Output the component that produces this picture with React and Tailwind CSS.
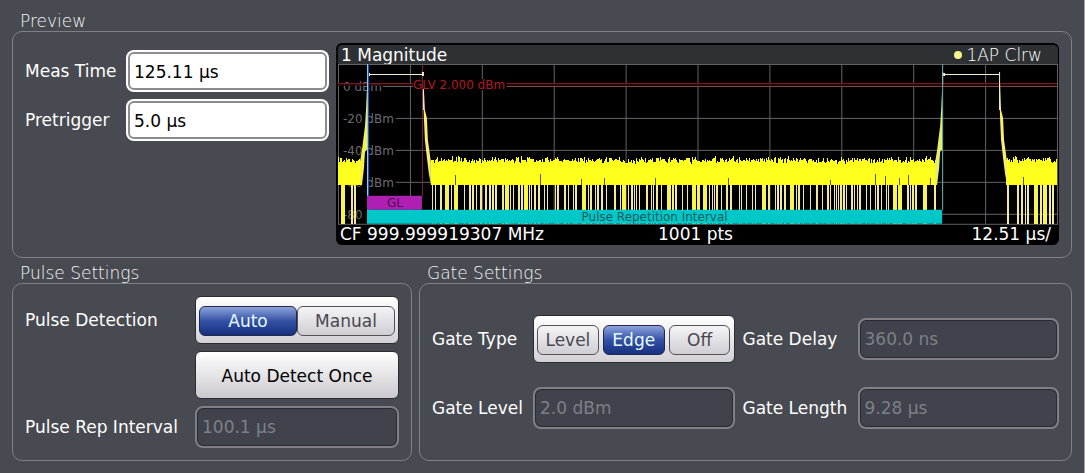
import { useState } from 'react';

const GRID_X = [72, 144, 216, 288, 360, 432, 504, 576, 648];
const GRID_Y = [
  { y: 22, label: '0 dBm', x: 5, end: 45 },
  { y: 54, label: '-20 dBm', x: 5, end: 58 },
  { y: 86, label: '-40 dBm', x: 5, end: 58 },
  { y: 118, label: '-60 dBm', x: 5, end: 58 },
  { y: 150, label: '-80', x: 5, end: 30 },
];

// x ranges of the trace that only contain the noise floor
const NOISE_RANGES = [
  [0, 24],
  [93, 600],
  [669, 720],
];

function buildNoise() {
  let seed = 71;
  const random = () => {
    seed = (seed * 16807) % 2147483647;
    return seed / 2147483647;
  };
  let band = '';
  let drops = '';
  let solidDrops = '';
  let notches = '';
  NOISE_RANGES.forEach(([from, to]) => {
    for (let x = from; x < to; x++) {
      const top = 92 + Math.round((random() + random()) * 4);
      band += `M${x} ${top}h1V121h-1z`;
      if (random() > 0.95) notches += `M${x} ${109 + Math.round(random() * 7)}h1V121h-1z`;
    }
    let x = from + 1 + Math.round(random() * 3);
    while (x < to - 2) {
      const r = random();
      const width = r < 0.5 ? 1 : r < 0.85 ? 2 : 4;
      const bar = `M${x} 121h${width}V160h-${width}z`;
      if (width > 2) solidDrops += bar;
      else drops += bar;
      x += width + 1 + Math.floor(random() * random() * 9);
    }
  });
  return { band, drops, solidDrops, notches };
}

const NOISE = buildNoise();

function MagnitudePlot() {
  return (
    <svg
      viewBox="0 0 721 161"
      className="block w-full h-auto"
      fontFamily="'DejaVu Sans', sans-serif"
      fontSize="12"
      role="img"
      aria-label="Magnitude"
    >
      <rect width="721" height="161" fill="#000" />

      {/* grid */}
      <g fill="#626366">
        <rect width="721" height="1" />
        <rect y="160" width="721" height="1" />
        <rect width="1" height="161" />
        <rect x="720" width="1" height="161" />
        {GRID_X.map((x) => (
          <rect key={x} x={x} width="1" height="160" />
        ))}
        {GRID_Y.map((g) => (
          <rect key={g.y} x={g.end} y={g.y} width={720 - g.end} height="1" />
        ))}
      </g>
      <g fill="#6c6c70">
        {GRID_Y.map((g) => (
          <text key={g.y} x={g.x} y={g.y + 5}>
            {g.label}
          </text>
        ))}
      </g>

      {/* gate level */}
      <rect y="20" width="720" height="2" fill="#2c080a" fillOpacity="0.8" />
      <rect y="19" width="720" height="1" fill="#7a1f22" />
      <rect x="171" y="22" width="549" height="1" fill="#7a4446" />
      <rect x="75" y="15" width="94" height="11" fill="#080000" />
      <rect x="84" y="0" width="1" height="132" fill="#7c2440" />
      <text x="75" y="25" fill="#a81e24">GLV 2.000 dBm</text>

      {/* trace */}
      <path d={NOISE.drops} fill="#f2ea96" shapeRendering="crispEdges" />
      <path d={NOISE.solidDrops} fill="#f8f450" shapeRendering="crispEdges" />
      <path d={NOISE.band} fill="#ffff1e" shapeRendering="crispEdges" />
      <path d={NOISE.notches} fill="#5c5a10" shapeRendering="crispEdges" />
      <path d="M22 121V98L24 86L27 62L28 46L29 24V86L27 88L26 104L24 121z" fill="#f6f04c" />
      <path d="M85 25H86L87 46L89 54L90 76L93 98V121L91 110L89 94L87 76L86 54z" fill="#f8f06c" />
      <path d="M598 121V98L600 86L603 62L604 46L605 24V86L603 88L602 104L600 121z" fill="#e4f06c" />
      <path d="M662 20H663L664 46L666 54L667 76L670 98V121L668 110L666 94L664 76L663 54z" fill="#f8f06c" />
      <g fill="#f6f0d4">
        <rect x="30" y="10" width="56" height="1" />
        <rect x="30" y="9" width="2" height="3" />
        <rect x="84" y="8" width="2" height="4" />
        <rect x="606" y="10" width="56" height="1" />
        <rect x="605" y="8" width="1" height="12" />
        <rect x="606" y="9" width="2" height="3" />
        <rect x="662" y="8" width="1" height="38" />
        <rect x="85" y="27" width="1" height="19" />
      </g>

      {/* pulse start and end */}
      <rect x="29" y="0" width="1" height="146" fill="#8fd0ff" />
      <rect x="30" y="0" width="1" height="146" fill="#1657b8" />
      <rect x="605" y="0" width="1" height="146" fill="#6fb4b4" />

      <rect x="29" y="132" width="55" height="14" fill="#b01fb4" />
      <text x="57" y="143" textAnchor="middle" fill="#4a1250">GL</text>
      <rect x="29" y="146" width="576" height="14" fill="#00c8c8" />
      <text x="317" y="157" textAnchor="middle" fill="#14595c">Pulse Repetition Interval</text>
    </svg>
  );
}

function Group({ title, className, children }) {
  return (
    <section className="flex flex-col min-w-0">
      <h2 className="pl-2 pt-px text-[17px] leading-5 font-extralight text-[#f4f5f7]">{title}</h2>
      <div className={`flex-1 border border-[#7e8187] rounded-[10px] ${className}`}>{children}</div>
    </section>
  );
}

function Field({ id, value, onChange, disabled }) {
  if (disabled) {
    return (
      <input
        id={id}
        type="text"
        value={value}
        disabled
        readOnly
        className="w-full min-w-0 h-[42px] px-[5px] rounded-lg border-2 border-[#7f8187] bg-[#40434b] text-[#7d8087] shadow-[inset_0_0_0_1px_#272a31]"
      />
    );
  }
  return (
    <div className="min-w-0 h-[42px] p-[2px] rounded-lg bg-white">
      <input
        id={id}
        type="text"
        value={value}
        onChange={(e) => onChange(e.target.value)}
        className="w-full h-full px-1 pt-[2px] rounded-md border-2 border-[#8b8c90] bg-white text-black"
      />
    </div>
  );
}

function Toggle({ label, options, value, onChange, className = '' }) {
  return (
    <div
      role="group"
      aria-label={label}
      className={`flex items-center h-12 px-[3px] pt-[2px] rounded-md border border-[#2b2d31] bg-linear-to-b from-white to-[#d3d1d6] ${className}`}
    >
      {options.map((option) => (
        <button
          key={option}
          type="button"
          aria-pressed={option === value}
          onClick={() => onChange(option)}
          className={
            option === value
              ? 'flex-1 h-[30px] rounded-md border border-[#23284a] bg-linear-to-b from-[#8fa4dc] via-[#3551a5] to-[#15307f] text-[#e6fbff]'
              : 'flex-1 h-[30px] rounded-md border border-[#55535a] bg-linear-to-b from-[#f4f3f6] to-[#d0ced3] text-[#4a484e]'
          }
        >
          {option}
        </button>
      ))}
    </div>
  );
}

export default function App() {
  const [measTime, setMeasTime] = useState('125.11 µs');
  const [pretrigger, setPretrigger] = useState('5.0 µs');
  const [detection, setDetection] = useState('Auto');
  const [gateType, setGateType] = useState('Edge');

  return (
    <main className="min-h-screen pt-[10px] px-3 pb-3 bg-[#474a50] border-r border-[#a0a2a6] font-['DejaVu_Sans',sans-serif] text-[17px] leading-5 text-white">
      <Group title="Preview" className="flex gap-[7px] pt-[11px] pb-3 px-3">
        <div className="grid grid-cols-[101px_203px] gap-y-[7px] items-center content-start pt-[7px]">
          <label htmlFor="meas-time">Meas Time</label>
          <Field id="meas-time" value={measTime} onChange={setMeasTime} />
          <label htmlFor="pretrigger">Pretrigger</label>
          <Field id="pretrigger" value={pretrigger} onChange={setPretrigger} />
        </div>

        <div className="flex-1 min-w-0 rounded-md border-t-2 border-l-2 border-r border-black bg-black overflow-hidden">
          <div className="flex justify-between items-center h-[19px] pl-[3px] pr-4 bg-[#2e3134]">
            <span>1 Magnitude</span>
            <span className="flex items-center gap-1 font-extralight">
              <span className="size-2 rounded-full bg-[#f8f48c]" />
              1AP Clrw
            </span>
          </div>
          <MagnitudePlot />
          <div className="grid grid-cols-3 h-5 pl-[2px] pr-[7px] leading-[18px] whitespace-nowrap">
            <span>CF 999.999919307 MHz</span>
            <span className="text-center">1001 pts</span>
            <span className="text-right">12.51 µs/</span>
          </div>
        </div>
      </Group>

      <div className="grid grid-cols-[400fr_653fr] gap-[7px] mt-1">
        <Group title="Pulse Settings" className="grid grid-cols-[170px_1fr] gap-y-[7px] items-center py-3 px-3">
          <span>Pulse Detection</span>
          <Toggle
            label="Pulse Detection"
            options={['Auto', 'Manual']}
            value={detection}
            onChange={setDetection}
          />
          <button
            type="button"
            className="col-start-2 h-12 pt-[2px] rounded-md border border-[#2b2d31] bg-linear-to-b from-white to-[#cbc9ce] text-black"
          >
            Auto Detect Once
          </button>
          <label htmlFor="pulse-rep">Pulse Rep Interval</label>
          <Field id="pulse-rep" value="100.1 µs" disabled />
        </Group>

        <Group
          title="Gate Settings"
          className="grid grid-cols-[101px_1fr_123px_1fr] gap-y-6 items-center content-center px-3"
        >
          <span>Gate Type</span>
          <Toggle
            label="Gate Type"
            options={['Level', 'Edge', 'Off']}
            value={gateType}
            onChange={setGateType}
            className="gap-1"
          />
          <label htmlFor="gate-delay" className="pl-2">Gate Delay</label>
          <Field id="gate-delay" value="360.0 ns" disabled />
          <label htmlFor="gate-level">Gate Level</label>
          <Field id="gate-level" value="2.0 dBm" disabled />
          <label htmlFor="gate-length" className="pl-2">Gate Length</label>
          <Field id="gate-length" value="9.28 µs" disabled />
        </Group>
      </div>
    </main>
  );
}
